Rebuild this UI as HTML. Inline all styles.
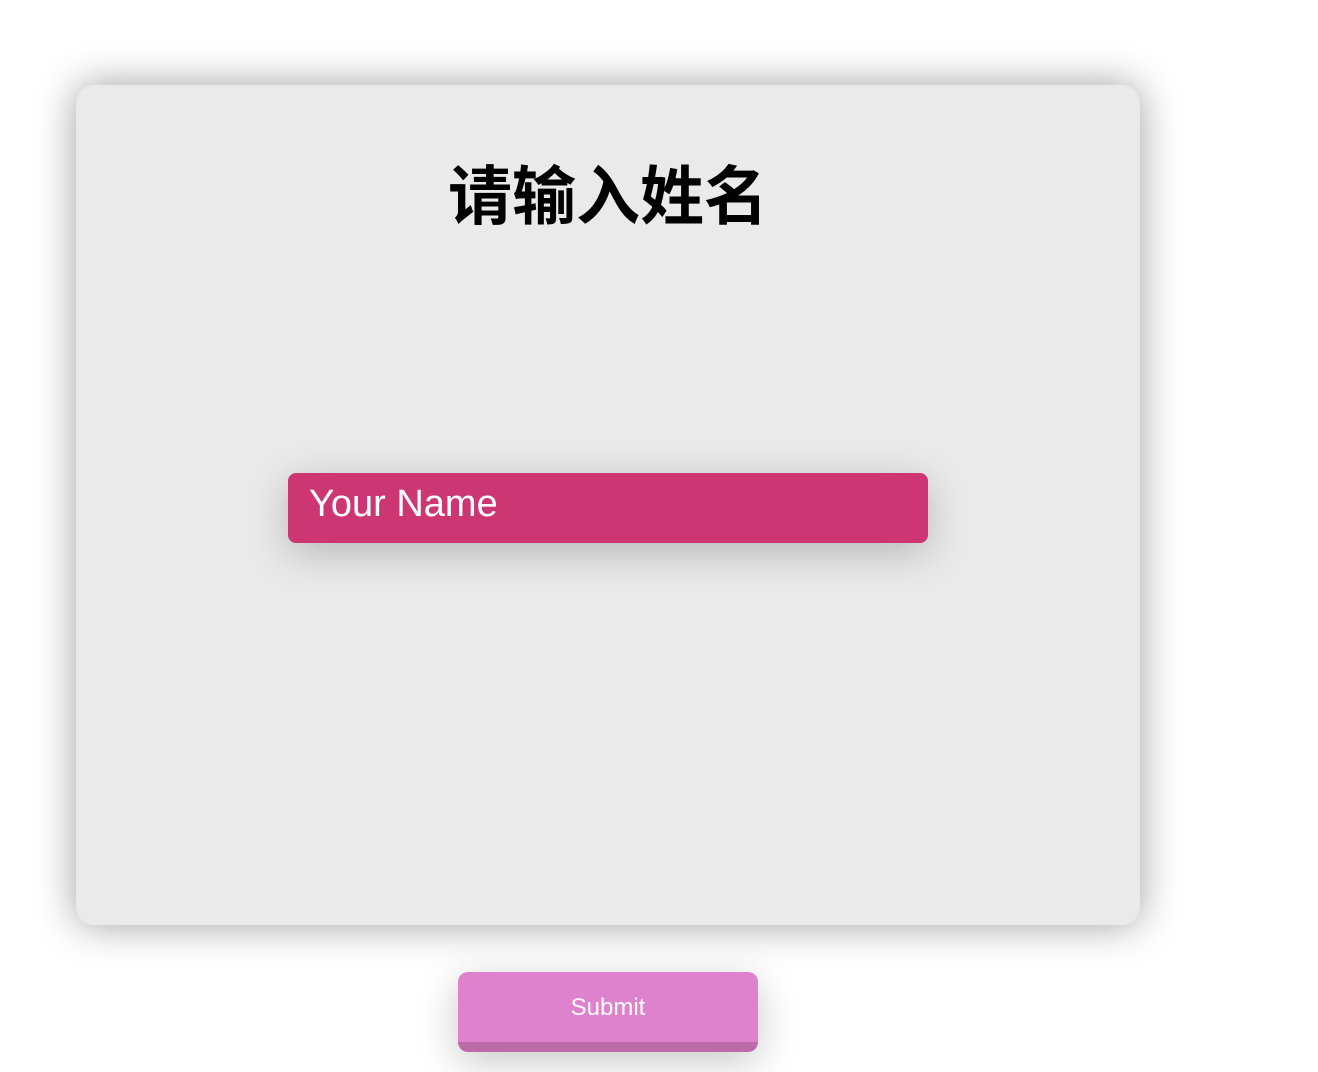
<!DOCTYPE html>
<html><head><meta charset="utf-8"><style>
html,body{margin:0;padding:0;background:#fff;width:1318px;height:1072px;overflow:hidden;font-family:"Liberation Sans","Noto Sans CJK SC",sans-serif;}
.card{position:absolute;left:76px;top:85px;width:1064px;height:840px;background:#eaeaea;border-radius:18px;box-shadow:0 0 40px rgba(0,0,0,0.38);}
h1{position:absolute;top:156px;margin:0;text-align:center;font-size:64px;font-weight:bold;line-height:72px;color:#000;font-family:"Noto Sans CJK SC",sans-serif;}
.inp{position:absolute;left:288px;top:473px;width:640px;height:70px;background:#cc3773;border-radius:8px;box-shadow:0 10px 40px rgba(0,0,0,0.22);color:#fff;font-size:38px;line-height:62px;padding-left:21px;box-sizing:border-box;}
.btn{position:absolute;left:458px;top:972px;width:300px;height:80px;background:#de82cd;border-radius:10px;box-shadow:0 10px 40px rgba(0,0,0,0.22);border-bottom:10px solid #bd6aab;box-sizing:border-box;color:#fff;font-size:24px;text-align:center;line-height:72px;}
</style></head><body>
<div class="card"></div>
<h1 style="left:76px;width:1064px;">请输入姓名</h1>
<div class="inp">Your Name</div>
<div class="btn">Submit</div>
</body></html>
